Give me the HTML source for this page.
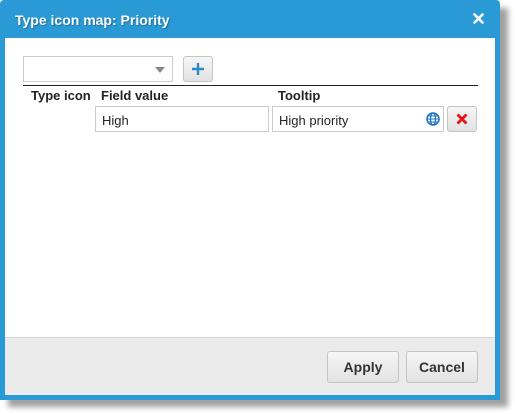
<!DOCTYPE html>
<html><head><style>
body{margin:0;width:515px;height:414px;background:#fff;position:relative;font-family:"Liberation Sans",Arial,sans-serif;font-size:13px;color:#222;overflow:hidden}
.shadow{position:absolute;left:8px;top:8px;width:500px;height:399px;background:#888;filter:blur(3px);opacity:.8}
.dlg{position:absolute;left:0;top:0;width:500px;height:400px;background:#2a9ad6;border-radius:4px 4px 0 0}
.title{position:absolute;left:15px;top:12px;color:#fff;font-weight:bold;font-size:14px;text-shadow:1px 1px 1px rgba(0,0,0,.3)}
.body{position:absolute;left:5px;top:38px;width:490px;height:299px;background:#fff}
.foot{position:absolute;left:5px;top:337px;width:490px;height:58px;background:#ebebeb;border-top:1px solid #d6d6d6;box-sizing:border-box}
.box{position:absolute;box-sizing:border-box;border:1px solid #ccc;background:#fff}
.btn{position:absolute;box-sizing:border-box;border:1px solid #c4c4c4;border-radius:3px;background:linear-gradient(#f6f6f6,#e2e2e2);text-align:center;font-weight:bold;color:#333;font-size:14px}
.h{position:absolute;top:88px;font-weight:bold;font-size:13px}
</style></head><body>
<div class="shadow"></div>
<div class="dlg">
<div class="title">Type icon map: Priority</div>
<svg style="position:absolute;left:473px;top:13px" width="11" height="11" viewBox="0 0 11 11"><path d="M1.5 1.5L9.5 9.5M9.5 1.5L1.5 9.5" stroke="#fff" stroke-width="2.6" stroke-linecap="round"/></svg>
</div>
<div class="body"></div>
<div class="foot"></div>
<div class="box" style="left:23px;top:56px;width:150px;height:26px"></div>
<div style="position:absolute;left:155px;top:67px;width:0;height:0;border-left:5px solid transparent;border-right:5px solid transparent;border-top:6px solid #888"></div>
<div class="btn" style="left:183px;top:56px;width:30px;height:26px"></div>
<svg style="position:absolute;left:191px;top:62px" width="14" height="14" viewBox="0 0 14 14"><path d="M7 1V13M1 7H13" stroke="#2a8ac8" stroke-width="2.4"/></svg>
<div style="position:absolute;left:23px;top:85px;width:455px;height:1px;background:#222"></div>
<div class="h" style="left:31px">Type icon</div>
<div class="h" style="left:101px">Field value</div>
<div class="h" style="left:278px">Tooltip</div>
<div class="box" style="left:95px;top:106px;width:174px;height:26px;padding:6px 0 0 6px">High</div>
<div class="box" style="left:272px;top:106px;width:172px;height:26px;padding:6px 0 0 6px">High priority</div>
<svg style="position:absolute;left:426px;top:112px" width="14" height="14" viewBox="0 0 14 14"><circle cx="7" cy="7" r="6" fill="#fff" stroke="#1a6fc0" stroke-width="1.5"/><ellipse cx="7" cy="7" rx="2.5" ry="6" fill="none" stroke="#1a6fc0" stroke-width="1.2"/><path d="M1 7H13M2 4H12M2 10H12" stroke="#1a6fc0" stroke-width="1.1"/></svg>
<div class="btn" style="left:447px;top:106px;width:30px;height:26px"></div>
<svg style="position:absolute;left:456px;top:113px" width="12" height="12" viewBox="0 0 12 12"><path d="M1.5 1.5L10.5 10.5M10.5 1.5L1.5 10.5" stroke="#e01818" stroke-width="2.8"/></svg>
<div class="btn" style="left:327px;top:351px;width:72px;height:32px;line-height:30px">Apply</div>
<div class="btn" style="left:406px;top:351px;width:72px;height:32px;line-height:30px">Cancel</div>
</body></html>
